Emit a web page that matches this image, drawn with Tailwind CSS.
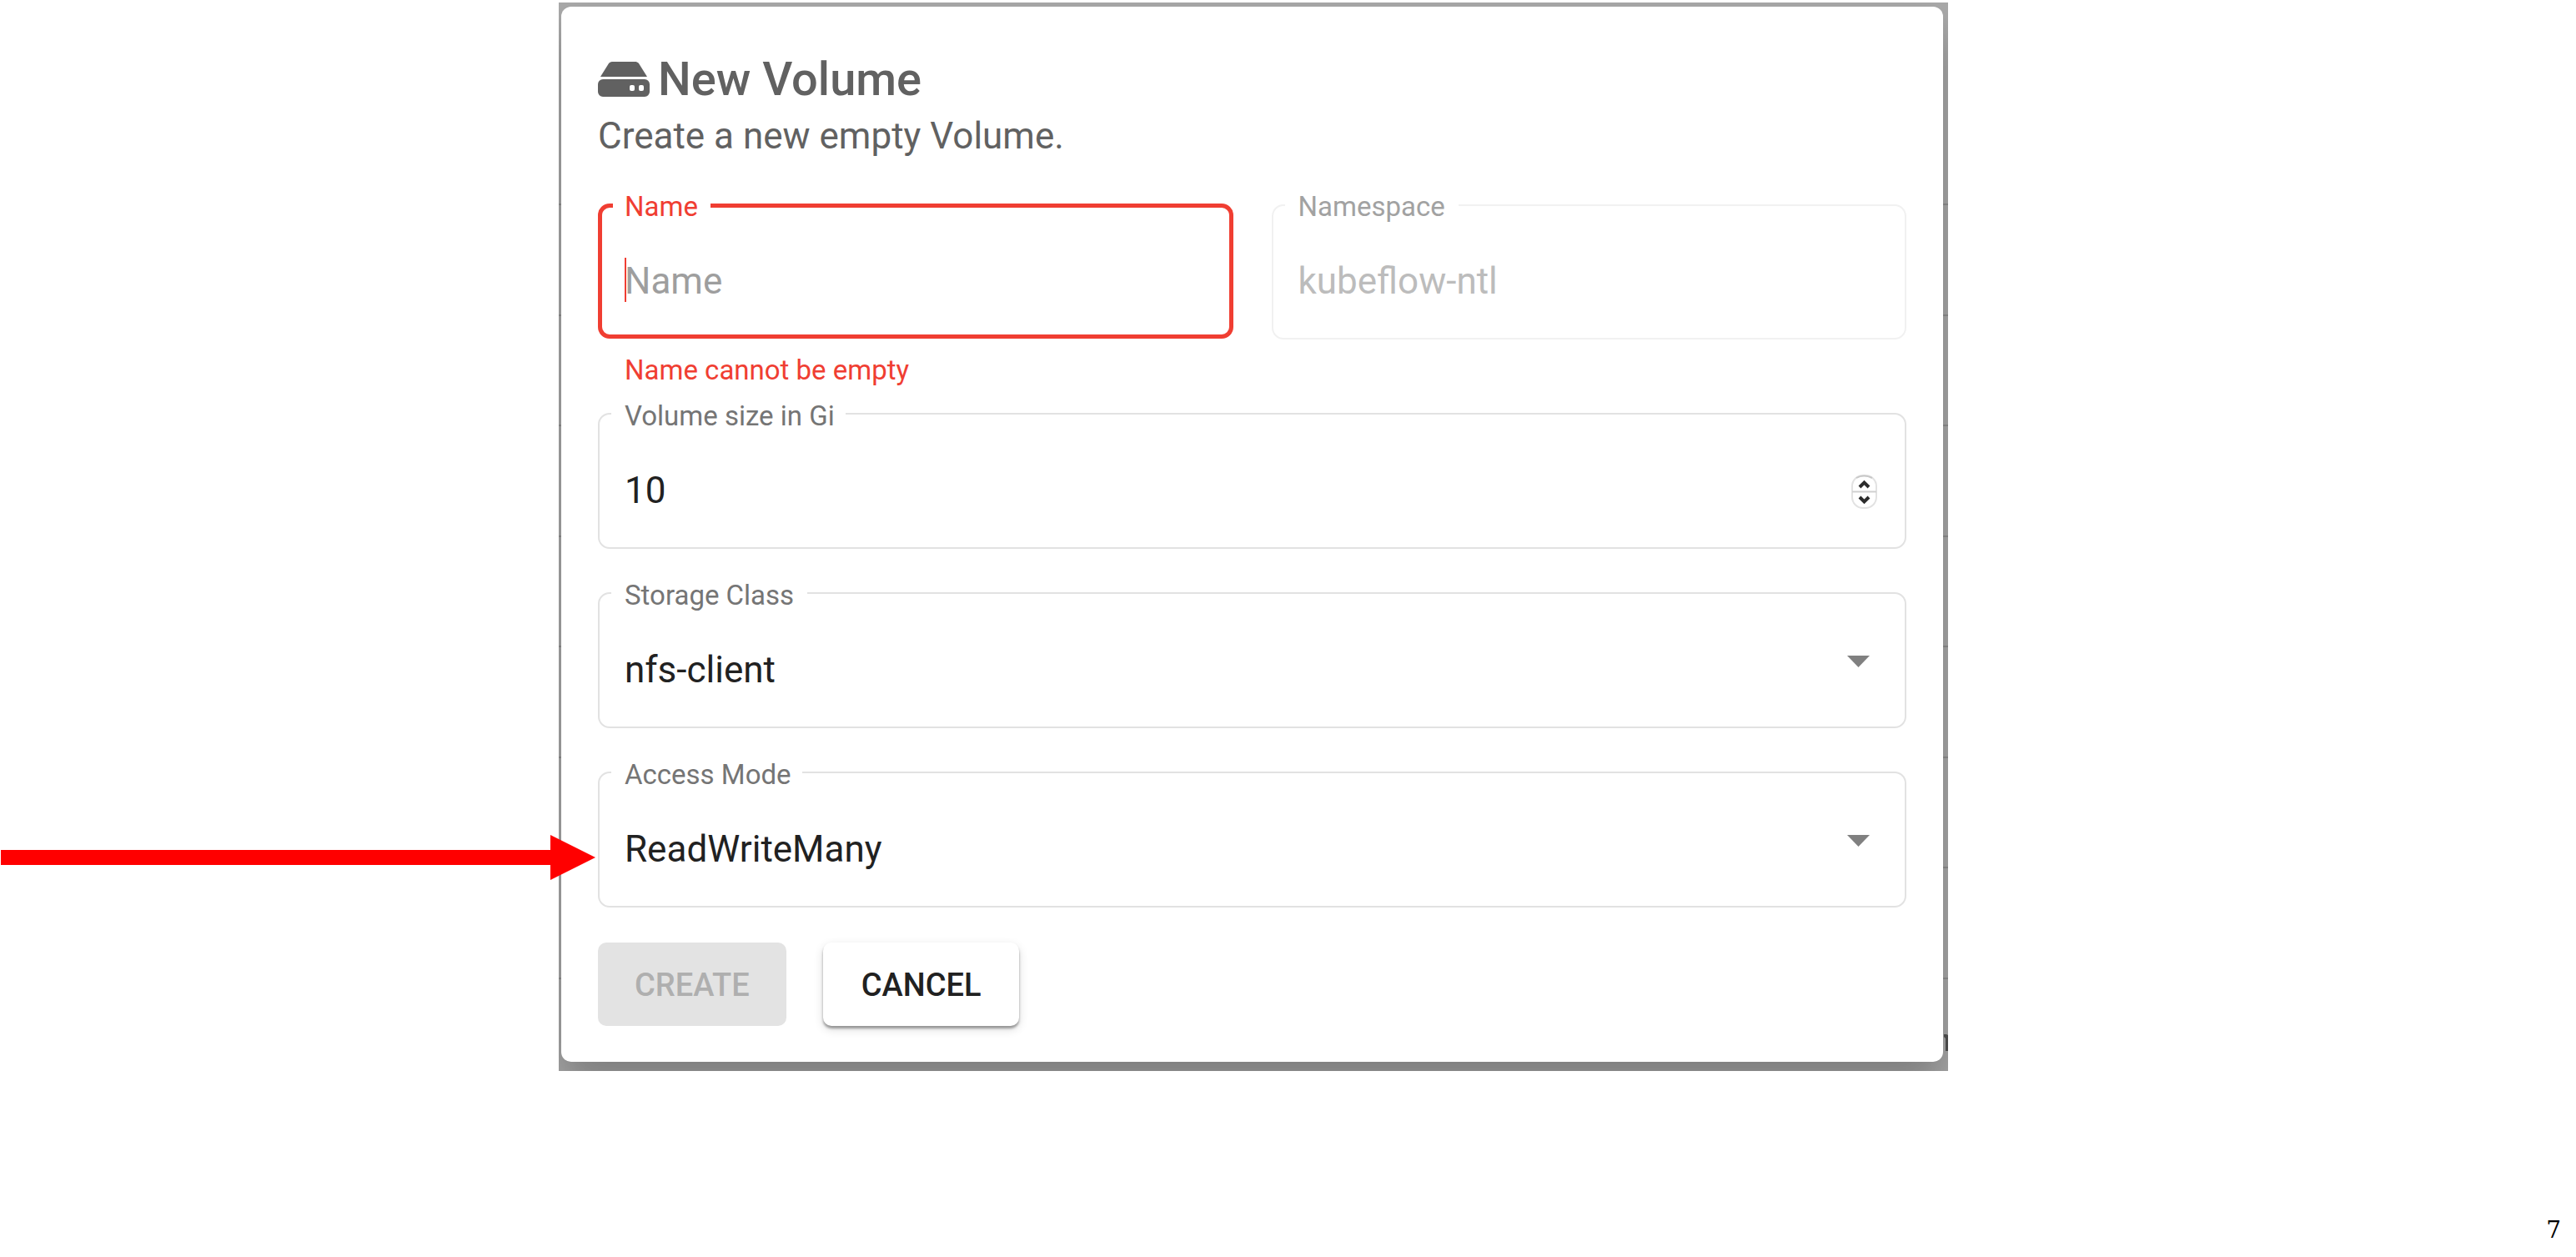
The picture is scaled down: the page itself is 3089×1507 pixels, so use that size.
<!DOCTYPE html>
<html lang="en">
<head>
<meta charset="utf-8">
<title>New Volume</title>
<script src="https://cdn.jsdelivr.net/npm/@tailwindcss/browser@4"></script>
</head>
<body class="bg-white">
<div class="min-h-screen flex flex-col justify-between overflow-x-hidden font-['Roboto',sans-serif]">
  <main class="grid grid-cols-[670fr_1666fr_753fr] pt-[3px]">
    <div class="relative col-start-2 pt-[5px] pb-[11px] pl-[3px] pr-[6px]">
      <!-- dimmed page behind the dialog -->
      <div class="absolute inset-0 overflow-hidden bg-[#a9a9a9]" aria-hidden="true">
        <div class="absolute inset-x-0 top-[241px] bottom-[110px] flex flex-col justify-between">
          <div class="h-[2px] bg-[#8f8f8f]"></div><div class="h-[2px] bg-[#8f8f8f]"></div><div class="h-[2px] bg-[#8f8f8f]"></div><div class="h-[2px] bg-[#8f8f8f]"></div>
          <div class="h-[2px] bg-[#8f8f8f]"></div><div class="h-[2px] bg-[#8f8f8f]"></div><div class="h-[2px] bg-[#8f8f8f]"></div><div class="h-[2px] bg-[#8f8f8f]"></div>
        </div>
        <div class="absolute top-[5px] bottom-[11px] left-[3px] right-[6px] rounded-[12px] shadow-[0_30px_50px_0_rgba(0,0,0,0.26)]"></div>
        <svg class="absolute right-0 bottom-[24px] w-[6px] h-[20px]" viewBox="0 0 6 20"><path d="M1 0h3l2 1v19H3V5L1 3z" fill="#484848"/></svg>
      </div>

      <form class="relative rounded-[12px] bg-white pt-[55px] px-[44px] pb-[43px] text-[44px]">
        <h1 class="flex items-center gap-[10px] h-[64px] text-[56px] leading-[64px] font-medium text-[#616161]">
          <svg class="w-[62px] h-[44px]" viewBox="0 0 62 44" fill="#616161" aria-hidden="true">
            <path d="M17 1h28c2 0 3 1 4 2l10 16H3L13 3c1-1 2-2 4-2z"/>
            <path fill-rule="evenodd" d="M6 22h50a6 6 0 0 1 6 6v9a6 6 0 0 1-6 6H6a6 6 0 0 1-6-6V28a6 6 0 0 1 6-6zM40 29a2 2 0 0 0-2 2v3a2 2 0 0 0 2 2h2a2 2 0 0 0 2-2v-3a2 2 0 0 0-2-2zM51 29a2 2 0 0 0-2 2v3a2 2 0 0 0 2 2h2a2 2 0 0 0 2-2v-3a2 2 0 0 0-2-2z"/>
          </svg>
          New Volume
        </h1>
        <p class="h-[72px] leading-[72px] text-[#616161]">Create a new empty Volume.</p>

        <div class="mt-[27px] grid grid-cols-2 gap-[46px] items-start">
          <div>
            <fieldset class="relative min-w-0 rounded-[14px] border-[5px] border-[#f03e32]">
              <legend class="ml-[13px] pt-[4px] pl-[14px] pr-[15px] text-[33px] leading-[36px] text-[#f03e32]"><label for="name">Name</label></legend>
              <input id="name" type="text" placeholder="Name" aria-describedby="name-error" class="block w-full h-[135px] pt-[44px] pb-[37px] pl-[27px] pr-[27px] leading-[54px] bg-transparent outline-none text-[#212121] placeholder:text-[#9e9e9e]">
              <span class="absolute left-[27px] top-[43px] w-[2px] h-[53px] bg-[#f03e32]"></span>
            </fieldset>
            <p id="name-error" class="mt-[20px] ml-[32px] text-[33px] leading-[36px] text-[#f03e32]">Name cannot be empty</p>
          </div>
          <fieldset class="min-w-0 rounded-[14px] border-2 border-[#f1f1f1]">
            <legend class="ml-[14px] pt-[4px] px-[16px] text-[33px] leading-[36px] text-[#a2a2a2]"><label for="namespace">Namespace</label></legend>
            <input id="namespace" type="text" value="kubeflow-ntl" disabled class="block w-full h-[139px] pt-[44px] pb-[41px] px-[30px] leading-[54px] bg-transparent text-[#bcbcbc]">
          </fieldset>
        </div>

        <div class="mt-[13px] flex flex-col gap-[32px]">
          <fieldset class="relative min-w-0 rounded-[14px] border-2 border-[#e2e2e2]">
            <legend class="ml-[14px] pt-[6px] pl-[16px] pr-[13px] text-[33px] leading-[36px] text-[#757575]"><label for="size">Volume size in Gi</label></legend>
            <input id="size" type="number" value="10" class="block w-full h-[139px] pt-[44px] pb-[41px] px-[30px] leading-[54px] bg-transparent outline-none text-[#212121] [appearance:textfield]">
            <svg class="pointer-events-none absolute right-[33px] top-[52px] w-[31px] h-[41px]" viewBox="0 0 31 41" fill="none" aria-hidden="true">
              <rect x="1" y="1" width="29" height="39" rx="13" stroke="#e2e2e2" stroke-width="2"/>
              <path d="M6 4q9-5 19 0" stroke="#c8c8c8" stroke-width="2"/>
              <path d="M1 20.500h29" stroke="#d0d0d0" stroke-width="2"/>
              <path d="M10 15l5.500-5.500L21 15M10 27l5.500 5.500L21 27" stroke="#2c2c2c" stroke-width="4"/>
            </svg>
          </fieldset>
          <fieldset class="relative min-w-0 rounded-[14px] border-2 border-[#e2e2e2]">
            <legend class="ml-[14px] pt-[6px] px-[16px] text-[33px] leading-[36px] text-[#757575]"><label for="storage">Storage Class</label></legend>
            <select id="storage" class="block w-full h-[139px] pt-[44px] pb-[41px] px-[30px] leading-[54px] appearance-none bg-transparent outline-none text-[#212121]"><option>nfs-client</option></select>
            <svg class="pointer-events-none absolute right-[42px] top-[54px] w-[27px] h-[14px]" viewBox="0 0 27 14" aria-hidden="true"><path d="M0 0h27L13.500 14z" fill="#808080"/></svg>
          </fieldset>
          <div class="relative">
            <fieldset class="relative min-w-0 rounded-[14px] border-2 border-[#e2e2e2]">
              <legend class="ml-[14px] pt-[6px] pl-[16px] pr-[13px] text-[33px] leading-[36px] text-[#757575]"><label for="mode">Access Mode</label></legend>
              <select id="mode" class="block w-full h-[139px] pt-[44px] pb-[41px] px-[30px] leading-[54px] appearance-none bg-transparent outline-none text-[#212121]"><option>ReadWriteMany</option></select>
              <svg class="pointer-events-none absolute right-[42px] top-[54px] w-[27px] h-[14px]" viewBox="0 0 27 14" aria-hidden="true"><path d="M0 0h27L13.500 14z" fill="#808080"/></svg>
            </fieldset>
            <!-- arrow pointing at the access mode -->
            <div class="absolute right-full top-[96px] mr-[3px] flex items-center w-[23.08vw]" aria-hidden="true">
              <div class="grow h-[18px] bg-[#ff0000]"></div>
              <svg class="shrink-0 w-[54px] h-[54px]" viewBox="0 0 54 54"><path d="M0 0l54 27L0 54z" fill="#ff0000"/></svg>
            </div>
          </div>
        </div>

        <div class="mt-[42px] flex gap-[44px] text-[38px] font-medium">
          <button type="submit" disabled class="h-[100px] px-[44px] pt-[2px] rounded-[10px] bg-[#e3e3e3] text-[#afafaf]">CREATE</button>
          <button type="button" class="h-[100px] px-[46px] pt-[2px] rounded-[10px] bg-white text-[#212121] shadow-[0_3px_3px_rgba(0,0,0,0.35),0_4px_12px_rgba(0,0,0,0.14)]">CANCEL</button>
        </div>
      </form>
    </div>
  </main>
  <footer class="flex justify-end pr-[18px] pb-[14px] font-['DejaVu_Serif',serif] text-[28px] leading-[36px] text-black">7</footer>
</div>
</body>
</html>
